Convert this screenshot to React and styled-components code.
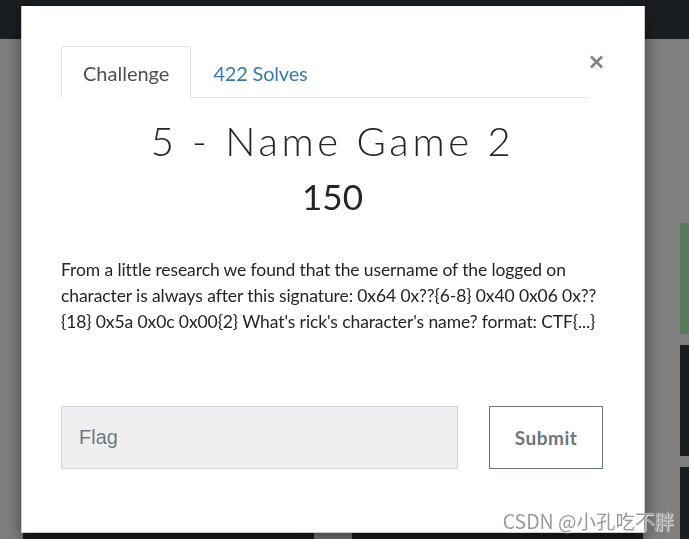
import React from 'react';
import styled, { createGlobalStyle } from 'styled-components';

const GlobalStyle = createGlobalStyle`
	html, body {
		margin: 0;
		padding: 0;
		overflow: hidden;
	}
	body {
		font-family: Lato, 'Open Sans', sans-serif;
		background: #7f7f7f;
	}
	* {
		box-sizing: border-box;
	}
`;

const Page = styled.div`
	width: 100vw;
	height: 100vh;
	overflow: hidden;
	background: #7f7f7f;
`;

const Navbar = styled.div`
	height: 39px;
	background: #1b1e21;
`;

const Board = styled.div`
	display: grid;
	grid-template-columns: repeat(3, 291px);
	column-gap: 37.5px;
	padding-left: 23px;
	align-items: start;
`;

const Column = styled.div`
	display: flex;
	flex-direction: column;
	gap: 11px;
	padding-top: ${(p) => p.offset}px;
`;

const Card = styled.div`
	height: 111px;
	background: ${(p) => (p.solved ? '#587b5b' : '#1b1e21')};
	color: #808080;
	font-weight: 700;
	font-size: 20px;
	text-align: center;
	padding-top: 3px;
`;

const Overlay = styled.div`
	position: fixed;
	inset: 0;
	padding: 6px 0 0 21px;
`;

const Modal = styled.div`
	width: 624px;
	height: 527px;
	background: #fff;
	border: 1px solid rgba(0, 0, 0, 0.2);
	border-top: none;
	box-shadow: 0 5px 15px rgba(0, 0, 0, 0.5);
	padding: 40px 40px 0 39px;
	display: flex;
	flex-direction: column;
`;

const Header = styled.div`
	display: flex;
	align-items: flex-start;
	gap: 1px;
`;

const Tabs = styled.ul`
	flex: 1;
	display: flex;
	list-style: none;
	margin: 0;
	padding: 0;
	border-bottom: 1px solid #dee2e6;
`;

const Tab = styled.li`
	margin-bottom: -1px;
	padding: 12px 21px 10px;
	font-size: 20px;
	line-height: 28px;
	border: 1px solid ${(p) => (p.active ? '#dee2e6' : 'transparent')};
	border-bottom-color: ${(p) => (p.active ? '#fff' : 'transparent')};
	border-radius: 4px 4px 0 0;
	background: ${(p) => (p.active ? '#fff' : 'transparent')};
	color: ${(p) => (p.active ? '#495057' : '#337ab7')};
	letter-spacing: ${(p) => (p.active ? '0' : '-0.2px')};
`;

const Close = styled.button`
	border: none;
	background: none;
	padding: 0;
	margin-top: 8px;
	width: 16px;
	height: 16px;
	display: flex;
	align-items: center;
	justify-content: center;
	color: #808080;
`;

const Title = styled.h3`
	margin: 19px 0 0;
	text-align: center;
	font-family: Lato, sans-serif;
	font-weight: 300;
	font-size: 40px;
	line-height: 48px;
	letter-spacing: 3.7px;
	color: #212529;
`;

const Points = styled.h4`
	margin: 10px 0 0;
	text-align: center;
	font-weight: 400;
	font-size: 35px;
	line-height: 42px;
	color: #212529;
`;

const Description = styled.p`
	margin: 40px 0 0;
	font-size: 17.5px;
	line-height: 26px;
	letter-spacing: -0.1px;
	color: #212529;
	white-space: nowrap;
`;

const SubmitRow = styled.form`
	margin-top: 71px;
	display: flex;
	gap: 31px;
	width: 542px;
`;

const FlagInput = styled.input`
	width: 397px;
	height: 63px;
	background: #efefef;
	border: 1px solid #ced4da;
	padding: 0 17px;
	font-family: 'Liberation Sans', Arial, sans-serif;
	font-size: 20px;
	color: #495057;
	outline: none;
	&::placeholder {
		color: #6c757d;
	}
`;

const SubmitButton = styled.button`
	width: 114px;
	height: 63px;
	background: #fff;
	border: 1px solid #6c757d;
	font-family: Lato, sans-serif;
	font-weight: 700;
	font-size: 19px;
	letter-spacing: 0.5px;
	color: #6c757d;
`;

const Watermark = styled.div`
	position: fixed;
	right: 15px;
	bottom: 6px;
	font-family: 'Noto Sans CJK SC', sans-serif;
	font-size: 19.5px;
	line-height: 24px;
	color: #9a9a9a;
	text-shadow: 0 0 1px #fff, 1px 1px 1px rgba(255, 255, 255, 0.8);
`;

export default function App() {
	return (
		<>
			<GlobalStyle />
			<Page>
				<Navbar />
				<Board>
					<Column offset={493}>
						<Card>150</Card>
					</Column>
					<Column offset={493}>
						<Card>200</Card>
					</Column>
					<Column offset={184}>
						<Card solved />
						<Card />
						<Card />
					</Column>
				</Board>
			</Page>
			<Overlay>
				<Modal>
					<Header>
						<Tabs>
							<Tab active>Challenge</Tab>
							<Tab>422 Solves</Tab>
						</Tabs>
						<Close aria-label="Close">
							<svg width="15" height="14" viewBox="0 0 15 14">
								<path d="M2 1.5 L13 12.5 M13 1.5 L2 12.5" stroke="#808080" strokeWidth="2.6" />
							</svg>
						</Close>
					</Header>
					<Title>5 - Name Game 2</Title>
					<Points>150</Points>
					<Description>
						From a little research we found that the username of the logged on
						<br />
						character is always after this signature: 0x64 0x??{'{6-8}'} 0x40 0x06 0x??
						<br />
						{'{18}'} 0x5a 0x0c 0x00{'{2}'} What's rick's character's name? format: CTF{'{...}'}
					</Description>
					<SubmitRow onSubmit={(e) => e.preventDefault()}>
						<FlagInput placeholder="Flag" />
						<SubmitButton type="submit">Submit</SubmitButton>
					</SubmitRow>
				</Modal>
			</Overlay>
			<Watermark>CSDN @小孔吃不胖</Watermark>
		</>
	);
}
